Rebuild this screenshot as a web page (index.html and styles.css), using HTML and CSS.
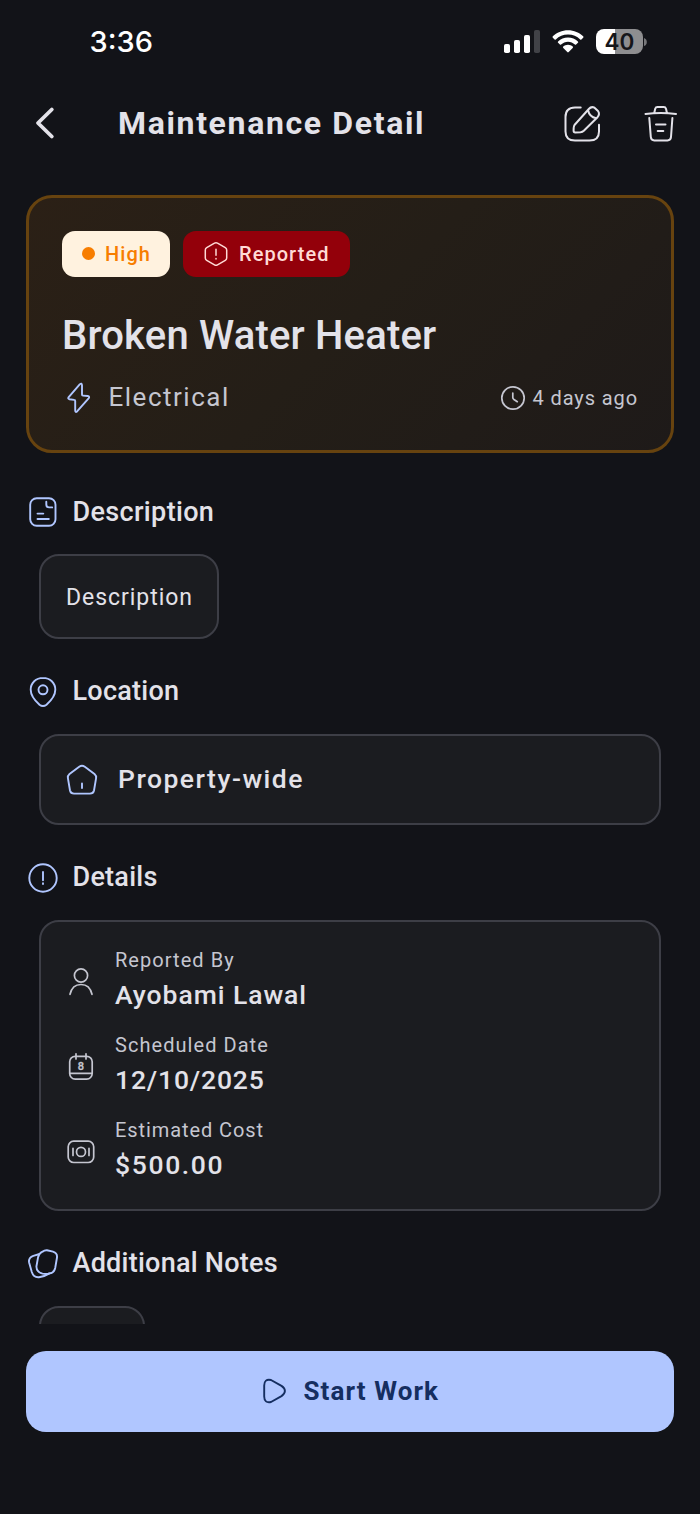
FILE: index.html
```html
<!DOCTYPE html>
<html lang="en">
<head>
<meta charset="utf-8">
<title>Maintenance Detail</title>
<link rel="stylesheet" href="styles.css">
</head>
<body>
<div class="screen">
  <div class="status">
    <span class="time">3:36</span>
    <div class="indicators">
      <svg class="signal" width="36" height="24" viewBox="0 0 36 24"><g fill="#fff"><rect x="0" y="14" width="6" height="9" rx="1.8"/><rect x="10" y="10" width="6" height="13" rx="1.8"/><rect x="20" y="5" width="6" height="18" rx="1.8"/></g><rect x="30" y="0" width="6" height="23" rx="1.8" fill="#414247"/></svg>
      <svg class="wifi" width="32" height="24" viewBox="0 0 32 24" fill="#fff"><path d="M16 .2C10 .2 4.700 2.500.8 6.300q-.6.7 0 1.400l1.800 1.800q.6.500 1.200 0C7 6.300 11.200 4.500 16 4.500s9 1.800 12.200 5q.6.500 1.200 0l1.800-1.800q.6-.7 0-1.400C27.300 2.500 22 .2 16 .2Z"/><path d="M16 7.400c-3.900 0-7.300 1.500-9.900 4-.5.500-.5.900 0 1.400l1.800 1.800q.6.500 1.200 0c1.900-1.800 4.200-2.900 6.900-2.900s5 1.100 6.900 2.900q.6.500 1.200 0l1.800-1.800c.5-.5.500-.9 0-1.400-2.600-2.500-6-4-9.900-4Z"/><path d="M16 14.700c-1.900 0-3.500.7-4.700 1.900-.5.500-.4.900 0 1.300l4 4.200q.7.600 1.400 0l4-4.200c.4-.4.500-.8 0-1.300-1.200-1.200-2.800-1.900-4.700-1.900Z"/></svg>
      <div class="battery"><span class="level">40</span><svg width="4" height="8" viewBox="0 0 4 8"><path d="M1 0Q3.800 1 3.800 4T1 8Z" fill="#77777a"/></svg></div>
    </div>
  </div>

  <header class="appbar">
    <svg class="back" width="24" height="36" viewBox="0 0 24 36"><path d="M18.800 4.500 5 18l13.800 13.500" stroke-width="3.800"/></svg>
    <h1>Maintenance Detail</h1>
    <svg class="edit" width="40" height="40" viewBox="0 0 40 40"><path d="M18.700 3.500H13Q3.500 3.500 3.500 13V27.500Q3.500 36.500 13 36.500H27.500Q37 36.500 37 27.500V20.700"/><path d="M12.500 21 26.800 5Q29.300 2.100 32.500 3.700L36 7Q38.200 10 35.500 13.200L21.800 26.800Q20.500 28 18.500 28.200L13.200 28.500Q11.600 28.500 11.600 26.800Q11.500 22.300 12.500 21ZM26 6Q27.300 12.800 34.200 14.300"/></svg>
    <svg class="trash" width="36" height="40" viewBox="0 0 36 40"><path d="M2.500 9.900Q17.700 8.300 33 9.900M11.300 8.800 12.200 4.800Q12.700 3.100 14.500 3.100H20.700Q22.500 3.100 23 4.800L23.900 8.800M6.300 14 7.800 33Q8.100 36.400 11.300 36.400H24.500Q27.700 36.400 28 33L29.400 14M13 20.400H22.500M14.700 27H20.300"/></svg>
  </header>

  <main class="content">
    <section class="hero">
      <div class="chips">
        <span class="chip high"><i class="dot"></i><span>High</span></span>
        <span class="chip reported"><svg width="24" height="26" viewBox="0 0 24 26"><path d="M10.500 2.200Q12 1.300 13.500 2.200L21.300 6.700Q22.700 7.500 22.700 9V17Q22.700 18.500 21.300 19.300L13.500 23.800Q12 24.700 10.500 23.800L2.700 19.300Q1.300 18.500 1.300 17V9Q1.300 7.500 2.700 6.700ZM12 8.300V14.200M12 17.400V18"/></svg><span>Reported</span></span>
      </div>
      <h2>Broken Water Heater</h2>
      <div class="meta">
        <svg class="blue" width="24" height="32" viewBox="0 0 24 32"><path d="M12.700 2.400Q14.900.5 15 3.400V12.500Q15 13.500 16 13.600L20.700 14Q23.100 14.400 21.600 16.300L10.300 29.200Q8.300 31 8.200 28.500V19Q8.200 18 7.200 17.900L2.500 17.300Q.4 16.900 1.700 15.100Z"/></svg>
        <span class="category">Electrical</span>
        <svg class="clock" width="26" height="26" viewBox="0 0 26 26"><circle cx="13" cy="13" r="11.200"/><path d="M12.800 8V12.500Q12.800 13.500 13.600 14.200L17.300 16.700"/></svg>
        <span class="ago">4 days ago</span>
      </div>
    </section>

    <div class="heading"><svg class="blue" width="32" height="32" viewBox="0 0 32 32"><rect x="3.200" y="2.200" width="25.300" height="27.600" rx="6.500"/><path d="M19.300 5.800V8.500Q19.300 11.400 22.200 11.400H25.200M10.500 17.600H16.300M10.500 23H21.800"/></svg><h3>Description</h3></div>
    <div class="box fit"><span class="body">Description</span></div>

    <div class="heading loc"><svg class="blue" width="32" height="32" viewBox="0 0 32 32"><path d="M16 1.900C8.900 1.900 3.700 7 3.700 13.700C3.700 19.700 8 24.700 12.500 28.700Q16 31.300 19.500 28.700C24 24.700 28.300 19.700 28.300 13.700C28.300 7 23.100 1.900 16 1.900Z"/><circle cx="16" cy="13.800" r="4.500"/></svg><h3>Location</h3></div>
    <div class="box place"><svg class="blue" width="32" height="32" viewBox="0 0 32 32"><path d="M13.200 2.700Q16 .8 18.800 2.700L28.500 10Q30.500 11.700 30.100 14.200L28 26.500Q27.300 29.600 24 29.600H8Q4.700 29.600 4 26.500L1.900 14.200Q1.500 11.700 3.500 10ZM16 19.500V24"/></svg><span class="value property">Property-wide</span></div>

    <div class="heading det"><svg class="blue" width="32" height="32" viewBox="0 0 32 32"><circle cx="16" cy="16" r="13.700"/><path d="M16 10V18.200M16 21.300V22"/></svg><h3>Details</h3></div>
    <div class="box details">
      <div class="row"><svg width="32" height="32" viewBox="0 0 32 32"><circle cx="16" cy="9.500" r="6.600"/><path d="M5 28.300C6.500 21.700 10.500 18.500 16 18.500S25.500 21.700 27 28.300"/></svg><div><div class="label">Reported By</div><div class="value">Ayobami Lawal</div></div></div>
      <div class="row"><svg width="32" height="32" viewBox="0 0 32 32"><rect x="4.700" y="5.300" width="22.500" height="22.800" rx="5.500"/><path d="M11 2.800V8M21 2.800V8M5 22.300H27"/><text x="16" y="19" text-anchor="middle">8</text></svg><div><div class="label">Scheduled Date</div><div class="value date">12/10/2025</div></div></div>
      <div class="row"><svg width="32" height="32" viewBox="0 0 32 32"><rect x="3.200" y="5.200" width="25.500" height="21.300" rx="5.500"/><circle cx="16" cy="15.900" r="4.500"/><path d="M8 12.300V19.500M24 12.300V19.500"/></svg><div><div class="label cost-label">Estimated Cost</div><div class="value cost">$500.00</div></div></div>
    </div>

    <div class="heading notes"><svg class="blue" width="32" height="32" viewBox="0 0 32 32"><path d="M15.500 3.700Q17.500 2 20 2.200L26 3.600Q30.500 5 30 9.500L28.200 20Q27.200 25 22.500 25.400Q19.500 26.400 15.500 25.600Q9.500 24.200 9.400 18.500L11.100 9.200Q12 5.200 15.500 3.700Z"/><path d="M12.500 6 6.300 7.800Q1.200 9.800 2.100 14.500L4.800 24Q6.600 29.700 12 29.200Q17.500 28.600 22.500 25.400"/></svg><h3>Additional Notes</h3></div>
    <div class="box stub"></div>
  </main>

  <footer class="actions">
    <button class="start"><svg width="26" height="28" viewBox="0 0 26 28"><path d="M2.200 8.500Q2.300 1.500 9 3L19.500 8.900Q22.900 11.200 22.900 14T19.500 19.100L9 25Q2.300 26.500 2.200 19.500Z"/></svg><span>Start Work</span></button>
  </footer>
</div>
</body>
</html>
```

FILE: styles.css
```css
* { box-sizing: border-box; margin: 0; padding: 0; }
body { background: #121318; font-family: Roboto, "Liberation Sans", sans-serif; color: #e3e2e9; }
svg { display: block; flex: none; overflow: visible; fill: none; stroke: #c5c6d0; stroke-width: 1.7; stroke-linecap: round; stroke-linejoin: round; }
svg.blue { stroke: #b0c6ff; stroke-width: 1.9; }
span, h1, h2, h3, .label, .value { white-space: nowrap; }
.screen { height: 1514px; display: flex; flex-direction: column; overflow: hidden; }

.status { height: 83px; padding: 0 53px 0 89.500px; display: flex; align-items: center; justify-content: space-between; }
.time { font: 500 29px/34px Inter, sans-serif; color: #fff; padding-top: 1px; }
.indicators { display: flex; align-items: center; }
.indicators svg { stroke: none; }
.signal { margin-right: 12px; }
.wifi { margin-right: 12px; fill: #fff; }
.battery { display: flex; align-items: center; }
.level { width: 47px; height: 25px; border-radius: 8px; background: linear-gradient(90deg, #fff 41%, #8e8e90 41%); color: #15161a; font: 600 22.500px/25px Inter, sans-serif; text-align: center; }

.appbar { height: 83px; padding: 0 21px 0 33px; display: flex; align-items: center; }
.appbar svg { stroke: #e3e2e9; stroke-width: 2; margin-top: -1px; }
.appbar .back { margin-top: -3px; }
h1 { font-size: 32px; line-height: 40px; font-weight: 700; margin: -4px auto 0 61px; letter-spacing: 1.650px; }
.edit { margin-right: 41px; }

.content { height: 1158px; padding: 29px 26px 0; overflow: hidden; }
.hero { width: 647.500px; height: 258px; border: 3px solid #67430f; border-radius: 26px; background: linear-gradient(135deg, #2b2016, #241e17 50%, #1e1a19); padding: 33px; }
.chips { display: flex; gap: 13px; height: 45.500px; }
.chip { display: flex; align-items: center; border-radius: 13px; font-size: 20px; font-weight: 500; letter-spacing: 1.050px; }
.high { width: 108px; padding-left: 20px; background: #fff2df; color: #f77d00; gap: 10px; }
.dot { width: 13px; height: 13px; border-radius: 50%; background: #f77d00; }
.reported { width: 166.500px; padding-left: 20.500px; background: #93000a; color: #ffdad6; gap: 11.500px; }
.reported svg { stroke: #ffdad6; stroke-width: 1.5; }
h2 { font-size: 40px; font-weight: 500; line-height: 48px; margin-top: 35.500px; letter-spacing: .180px; }
.meta { display: flex; align-items: center; height: 32px; margin-top: 22px; color: #c5c6d0; }
.meta > svg.blue { margin-left: 4.500px; }
.category { font-size: 26px; line-height: 32px; margin: -2px auto 0 18px; letter-spacing: 1.500px; }
.ago { font-size: 20px; margin-left: 7px; margin-top: -1px; width: 105px; letter-spacing: .900px; }

.heading { display: flex; align-items: center; gap: 14px; height: 32px; margin-top: 43px; padding-left: .500px; }
.heading h3 { font-size: 27px; line-height: 32px; font-weight: 500; margin-top: -1px; letter-spacing: .250px; }
.heading:first-of-type h3 { letter-spacing: .350px; }
.box { margin: 26px 13px 0; border: 2px solid #3d3e46; border-radius: 20px; background: #1b1c20; display: flex; align-items: center; padding: 0 25px; }
.fit { width: 180px; height: 85px; }
.body { font-size: 23px; letter-spacing: .950px; padding-top: 2px; }
.loc { margin-top: 37px; }
.loc h3 { margin-top: -2px; }
.place { height: 91px; gap: 20px; }
.place svg { margin-top: 1px; }
.value { font-size: 26.500px; line-height: 34px; font-weight: 500; letter-spacing: .950px; }
.property { margin-top: -1px; letter-spacing: 1.500px; }
.det { margin-top: 36.500px; }
.details { height: 291px; display: block; padding: 24px 23.500px 0; margin-top: 26px; }
.row { height: 85px; display: flex; gap: 18.500px; }
.row svg { margin-top: 20px; }
.row text { font: 500 11px Roboto, sans-serif; fill: #c5c6d0; stroke: #c5c6d0; stroke-width: .3; }
.label { font-size: 20px; line-height: 28px; color: #c5c6d0; letter-spacing: 1.050px; }
.cost-label { letter-spacing: .920px; }
.details .value { margin-top: 4.500px; }
.details .date { letter-spacing: .850px; }
.details .cost { letter-spacing: 1.650px; }
.notes { margin-top: 37px; }
.stub { width: 106px; height: 85px; }

.actions { padding: 26.500px 26px 0; }
.start { width: 647.500px; height: 81.500px; border: 0; border-radius: 20px; background: #b0c6ff; color: #152e60; display: flex; align-items: center; justify-content: center; gap: 15px; font: 700 26px/32px Roboto, sans-serif; letter-spacing: 1.100px; padding-left: 2px; }
.start svg { stroke: #152e60; stroke-width: 1.900; }
```
